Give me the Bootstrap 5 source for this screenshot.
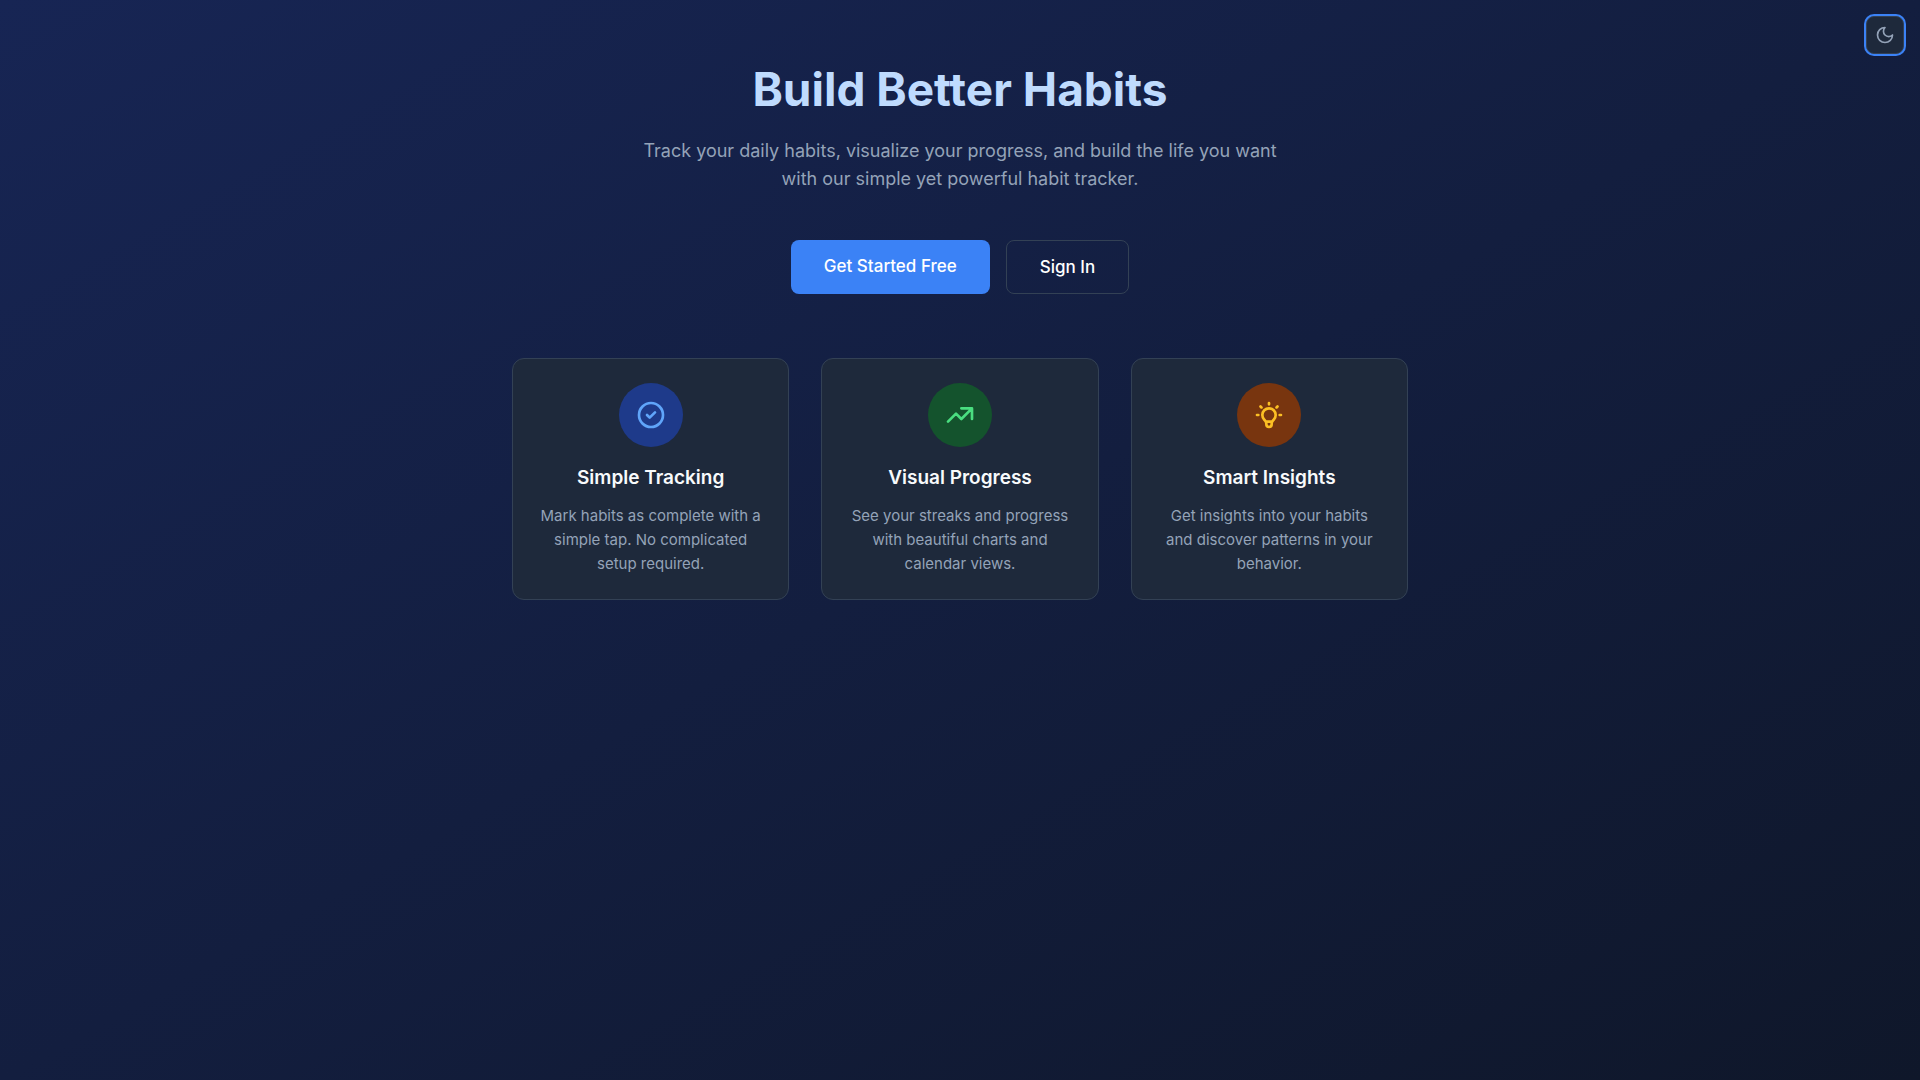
<!DOCTYPE html>
<html lang="en">
<head>
<meta charset="utf-8">
<meta name="viewport" content="width=device-width, initial-scale=1">
<title>Build Better Habits</title>
<link href="https://cdn.jsdelivr.net/npm/bootstrap@5.3.0/dist/css/bootstrap.min.css" rel="stylesheet">
<style>
  body { font-family: Inter, "Liberation Sans", sans-serif; font-size: 15px; line-height: 24px; color: #f8fafc; background: transparent; }
  .page { background: linear-gradient(to bottom right, #172554, #0f172a); }
  .landing { max-width: 928px; padding: 65px 16px; }
  .hero-title { font-size: 46px; line-height: 48px; font-weight: 700; color: #bfdbfe; margin-bottom: 24px; }
  .hero-text { max-width: 672px; font-size: 18px; line-height: 28px; color: #94a3b8; margin-bottom: 47px; }
  .cta { border-radius: 8px; padding: 12px 33px; font-size: 17px; line-height: 28px; font-weight: 500; text-decoration: none; color: #fff; }
  .cta-main { background: #3b82f6; }
  .cta-main:hover { background: #2563eb; }
  .cta-ghost { border: 1px solid #334155; }
  .features { margin-top: 64px; --bs-gutter-x: 32px; --bs-gutter-y: 32px; }
  .feature { background: #1e293b; border: 1px solid #334155; border-radius: 12px; padding: 24px 24px 23px; }
  .feature h2 { font-size: 19px; line-height: 28px; font-weight: 600; margin: 17px 0 12px; }
  .feature p { color: #94a3b8; }
  .disc { width: 64px; height: 64px; }
  .disc-blue { background: #1e3a8a; color: #60a5fa; }
  .disc-green { background: #14532d; color: #4ade80; }
  .disc-amber { background: #78350f; color: #fbbf24; }
  .theme-toggle { top: 16px; right: 16px; padding: 8px; background: #1e293b; border: 1px solid #334155; border-radius: 8px; color: #94a3b8; box-shadow: 0 0 0 2px #3b82f6; }
  svg { display: block; fill: none; stroke: currentColor; stroke-width: 2; stroke-linecap: round; stroke-linejoin: round; }
</style>
<script src="https://cdn.jsdelivr.net/npm/bootstrap@5.3.0/dist/js/bootstrap.bundle.min.js"></script>
</head>
<body>
<div class="page min-vh-100">
  <button type="button" class="theme-toggle position-fixed" aria-label="Toggle theme">
    <svg width="20" height="20" viewBox="0 0 24 24" aria-hidden="true"><path d="M12 3a6 6 0 0 0 9 9 9 9 0 1 1-9-9Z"/></svg>
  </button>
  <main class="landing mx-auto text-center">
    <h1 class="hero-title">Build Better Habits</h1>
    <p class="hero-text mx-auto">Track your daily habits, visualize your progress, and build the life you want <br class="d-none d-md-inline">with our simple yet powerful habit tracker.</p>
    <div class="d-flex flex-column flex-sm-row justify-content-center gap-3">
      <a href="#" class="cta cta-main">Get Started Free</a>
      <a href="#" class="cta cta-ghost">Sign In</a>
    </div>
    <div class="row row-cols-1 row-cols-md-3 features">
      <div class="col mt-0">
        <section class="feature h-100">
          <div class="disc disc-blue rounded-circle d-flex align-items-center justify-content-center mx-auto">
            <svg width="32" height="32" viewBox="0 0 24 24" aria-hidden="true"><path d="M9 12l2 2 4-4m6 2a9 9 0 11-18 0 9 9 0 0118 0z"/></svg>
          </div>
          <h2>Simple Tracking</h2>
          <p class="mb-0">Mark habits as complete with a simple tap. No complicated setup required.</p>
        </section>
      </div>
      <div class="col mt-0">
        <section class="feature h-100">
          <div class="disc disc-green rounded-circle d-flex align-items-center justify-content-center mx-auto">
            <svg width="32" height="32" viewBox="0 0 24 24" aria-hidden="true"><path d="M13 7h8m0 0v8m0-8l-8 8-4-4-6 6"/></svg>
          </div>
          <h2>Visual Progress</h2>
          <p class="mb-0">See your streaks and progress with beautiful charts and calendar views.</p>
        </section>
      </div>
      <div class="col mt-0">
        <section class="feature h-100">
          <div class="disc disc-amber rounded-circle d-flex align-items-center justify-content-center mx-auto">
            <svg width="32" height="32" viewBox="0 0 24 24" aria-hidden="true"><path d="M9.663 17h4.673M12 3v1m6.364 1.636l-.707.707M21 12h-1M4 12H3m3.343-5.657l-.707-.707m2.828 9.9a5 5 0 117.072 0l-.548.547A3.374 3.374 0 0014 18.469V19a2 2 0 11-4 0v-.531c0-.895-.356-1.754-.988-2.386l-.548-.547z"/></svg>
          </div>
          <h2>Smart Insights</h2>
          <p class="mb-0">Get insights into your habits and discover patterns in your behavior.</p>
        </section>
      </div>
    </div>
  </main>
</div>
</body>
</html>
